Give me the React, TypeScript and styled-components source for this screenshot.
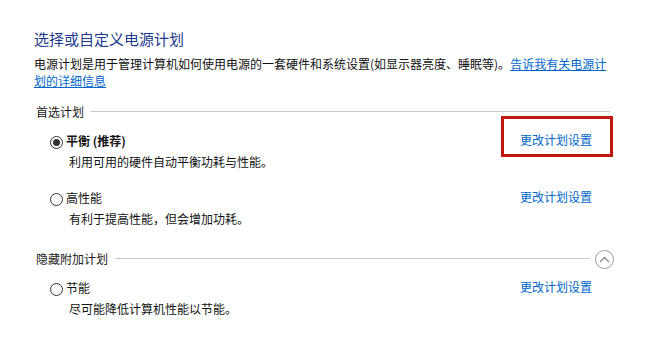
import React from "react";
import styled, { createGlobalStyle } from "styled-components";

const Global = createGlobalStyle`
  html, body { margin: 0; padding: 0; background: #ffffff; }
  body { font-family: "Noto Sans CJK SC", "Noto Sans", sans-serif; color: #1a1a1a; }
`;

const Page = styled.div`
  width: 671px;
  height: 351px;
  box-sizing: border-box;
  padding: 28px 0 0 34px;
  background: #fff;
`;

const Content = styled.div`
  width: 576px;
  display: flex;
  flex-direction: column;
`;

const Title = styled.h1`
  margin: 0;
  font-size: 15px;
  font-weight: 400;
  line-height: 21px;
  color: #1e3a8e;
`;

const Desc = styled.p`
  margin: 6px 0 0;
  font-size: 12px;
  line-height: 17px;
  color: #111;
`;

const Link = styled.a<{ $underline?: boolean }>`
  color: #0066cc;
  text-decoration: ${(p) => (p.$underline ? "underline" : "none")};
  cursor: pointer;
`;

const SectionHeader = styled.div<{ $mt: number }>`
  margin-top: ${(p) => p.$mt}px;
  margin-left: 2px;
  display: flex;
  align-items: center;
  gap: 7px;
  height: 18px;
  font-size: 12px;
  line-height: 18px;
  color: #1a1a1a;
`;

const Rule = styled.div`
  flex: 1;
  height: 1px;
  background: #c8c8c8;
  margin-top: -1px;
`;

const Collapse = styled.span`
  width: 19px;
  height: 19px;
  box-sizing: border-box;
  border: 1px solid #9a9a9a;
  border-radius: 50%;
  display: flex;
  align-items: center;
  justify-content: center;
  margin-left: -2px;
  margin-right: -4px;
`;

const PlanRow = styled.div<{ $mt: number }>`
  margin-top: ${(p) => p.$mt}px;
  display: grid;
  grid-template-columns: 1fr 90px;
  padding-left: 16px;
`;

const PlanMain = styled.div`
  display: flex;
  flex-direction: column;
`;

const LabelLine = styled.div`
  display: flex;
  align-items: center;
  gap: 3px;
  height: 18px;
  font-size: 12px;
  line-height: 18px;
`;

const Radio = styled.span<{ $checked?: boolean }>`
  width: 13px;
  height: 13px;
  box-sizing: border-box;
  border: 1px solid #333;
  border-radius: 50%;
  display: flex;
  align-items: center;
  justify-content: center;
  margin-top: 3px;
  &::after {
    content: "";
    display: ${(p) => (p.$checked ? "block" : "none")};
    width: 7px;
    height: 7px;
    border-radius: 50%;
    background: #333;
  }
`;

const Label = styled.span<{ $bold?: boolean }>`
  font-weight: ${(p) => (p.$bold ? 700 : 400)};
  color: #111;
`;

const PlanDesc = styled.div`
  margin-top: 3px;
  padding-left: 19px;
  font-size: 12px;
  line-height: 17px;
  color: #111;
`;

const LinkCell = styled.div`
  position: relative;
  font-size: 12px;
  line-height: 18px;
  height: 18px;
  margin-top: -1px;
`;

const Highlight = styled.span`
  position: absolute;
  left: -19px;
  top: -15px;
  width: 112px;
  height: 41px;
  box-sizing: border-box;
  border: 3px solid #c0170f;
  pointer-events: none;
`;

type Plan = {
  name: string;
  desc: string;
  checked?: boolean;
  bold?: boolean;
  highlight?: boolean;
  mt: number;
};

const PlanItem = ({ plan }: { plan: Plan }) => (
  <PlanRow $mt={plan.mt}>
    <PlanMain>
      <LabelLine>
        <Radio $checked={plan.checked} />
        <Label $bold={plan.bold}>{plan.name}</Label>
      </LabelLine>
      <PlanDesc>{plan.desc}</PlanDesc>
    </PlanMain>
    <LinkCell>
      <Link>更改计划设置</Link>
      {plan.highlight && <Highlight />}
    </LinkCell>
  </PlanRow>
);

export default function App() {
  return (
    <>
      <Global />
      <Page>
        <Content>
          <Title>选择或自定义电源计划</Title>
          <Desc>
            电源计划是用于管理计算机如何使用电源的一套硬件和系统设置(如显示器亮度、睡眠等)。
            <Link $underline>告诉我有关电源计划的详细信息</Link>
          </Desc>
          <SectionHeader $mt={14}>
            <span>首选计划</span>
            <Rule />
          </SectionHeader>
          <PlanItem
            plan={{ name: "平衡 (推荐)", desc: "利用可用的硬件自动平衡功耗与性能。", checked: true, bold: true, highlight: true, mt: 11 }}
          />
          <PlanItem plan={{ name: "高性能", desc: "有利于提高性能，但会增加功耗。", mt: 19 }} />
          <SectionHeader $mt={23}>
            <span>隐藏附加计划</span>
            <Rule />
            <Collapse>
              <svg width="11" height="7" viewBox="0 0 11 7">
                <path d="M1 6 L5.5 1.5 L10 6" fill="none" stroke="#888" strokeWidth="1.3" />
              </svg>
            </Collapse>
          </SectionHeader>
          <PlanItem plan={{ name: "节能", desc: "尽可能降低计算机性能以节能。", mt: 11 }} />
        </Content>
      </Page>
    </>
  );
}
